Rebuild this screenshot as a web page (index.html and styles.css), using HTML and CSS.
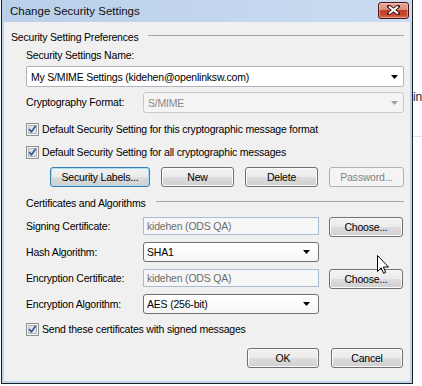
FILE: index.html
```html
<!DOCTYPE html>
<html lang="en">
<head>
  <meta charset="UTF-8" />
  <meta name="viewport" content="width=device-width, initial-scale=1.0"/>
  <title>Change Security Settings</title>
  <link rel="stylesheet" href="styles.css">
</head>
<body>

<div class="desktop">
  <div class="edge-left"></div>

  <div class="window">
    <div class="titlebar">
      <span class="title">Change Security Settings</span>
      <div class="close-btn">
        <svg width="13" height="10" viewBox="0 0 13 10">
          <path d="M2 1.5 L11 8.5 M11 1.5 L2 8.5" stroke="#4a1c1c" stroke-width="4" stroke-linecap="square"/>
          <path d="M2 1.5 L11 8.5 M11 1.5 L2 8.5" stroke="#fff" stroke-width="2"/>
        </svg>
      </div>
    </div>

    <div class="client">
      <div class="group-head first">
        <span>Security Setting Preferences</span>
        <div class="rule"></div>
      </div>

      <div class="label name-label">Security Settings Name:</div>
      <div class="combo name-combo">
        <span>My S/MIME Settings (kidehen@openlinksw.com)</span>
        <svg class="arrow" width="7" height="4" viewBox="0 0 7 4"><path d="M0 0 H7 L3.5 4 Z" fill="#000"/></svg>
      </div>

      <div class="format-row">
        <span class="label">Cryptography Format:</span>
        <div class="combo disabled">
          <span>S/MIME</span>
          <svg class="arrow" width="7" height="4" viewBox="0 0 7 4"><path d="M0 0 H7 L3.5 4 Z" fill="#a0a0a0"/></svg>
        </div>
      </div>

      <div class="check cb-first">
        <svg class="box" width="13" height="13" viewBox="0 0 13 13">
          <rect x="0.5" y="0.5" width="12" height="12" fill="#f6f6f6" stroke="#8e8f8f"/>
          <rect x="2.5" y="2.5" width="8" height="8" fill="#dfe3ea" stroke="#b4b8c0"/>
          <path d="M3.2 6.2 L5.4 8.8 L9.8 2.8" fill="none" stroke="#3f5e9a" stroke-width="1.8"/>
        </svg>
        <span>Default Security Setting for this cryptographic message format</span>
      </div>
      <div class="check cb-second">
        <svg class="box" width="13" height="13" viewBox="0 0 13 13">
          <rect x="0.5" y="0.5" width="12" height="12" fill="#f6f6f6" stroke="#8e8f8f"/>
          <rect x="2.5" y="2.5" width="8" height="8" fill="#dfe3ea" stroke="#b4b8c0"/>
          <path d="M3.2 6.2 L5.4 8.8 L9.8 2.8" fill="none" stroke="#3f5e9a" stroke-width="1.8"/>
        </svg>
        <span>Default Security Setting for all cryptographic messages</span>
      </div>

      <div class="button-row">
        <div class="btn focused labels-btn">Security Labels...</div>
        <div class="btn">New</div>
        <div class="btn">Delete</div>
        <div class="btn disabled pwd-btn">Password...</div>
      </div>

      <div class="group-head second">
        <span>Certificates and Algorithms</span>
        <div class="rule"></div>
      </div>

      <div class="cert-grid">
        <span class="label">Signing Certificate:</span>
        <div class="textbox">kidehen (ODS QA)</div>
        <div class="btn">Choose...</div>

        <span class="label">Hash Algorithm:</span>
        <div class="combo list">
          <span>SHA1</span>
          <svg class="arrow" width="7" height="4" viewBox="0 0 7 4"><path d="M0 0 H7 L3.5 4 Z" fill="#000"/></svg>
        </div>
        <div></div>

        <span class="label">Encryption Certificate:</span>
        <div class="textbox">kidehen (ODS QA)</div>
        <div class="btn">Choose...</div>

        <span class="label">Encryption Algorithm:</span>
        <div class="combo list">
          <span>AES (256-bit)</span>
          <svg class="arrow" width="7" height="4" viewBox="0 0 7 4"><path d="M0 0 H7 L3.5 4 Z" fill="#000"/></svg>
        </div>
        <div></div>
      </div>

      <div class="check cb-send">
        <svg class="box" width="13" height="13" viewBox="0 0 13 13">
          <rect x="0.5" y="0.5" width="12" height="12" fill="#f6f6f6" stroke="#8e8f8f"/>
          <rect x="2.5" y="2.5" width="8" height="8" fill="#dfe3ea" stroke="#b4b8c0"/>
          <path d="M3.2 6.2 L5.4 8.8 L9.8 2.8" fill="none" stroke="#3f5e9a" stroke-width="1.8"/>
        </svg>
        <span>Send these certificates with signed messages</span>
      </div>

      <div class="dialog-buttons">
        <div class="btn">OK</div>
        <div class="btn">Cancel</div>
      </div>
    </div>
  </div>

  <div class="behind">
    <div class="behind-text">in</div>
    <div class="behind-band"></div>
  </div>
</div>

<svg class="cursor" width="12" height="19" viewBox="0 0 12 19">
  <path d="M0.5 0.5 V16.5 L4.2 12.8 L6.6 18.3 L8.7 17.4 L6.4 12 H11.5 Z" fill="#fff" stroke="#000"/>
</svg>

</body>
</html>
```

FILE: styles.css
```css
body {
  margin: 0;
  background: #ffffff;
  font-family: 'Liberation Sans', Arial, sans-serif;
  font-size: 10.5px;
  letter-spacing: -0.2px;
  color: #000;
  position: relative;
  width: 422px;
  height: 386px;
  overflow: hidden;
}
.desktop {
  display: flex;
  align-items: flex-start;
}
.edge-left {
  width: 1px;
  height: 386px;
  background: #f4f4f4;
}
.window {
  box-sizing: border-box;
  width: 412px;
  height: 384px;
  border: 1px solid #1f1f1f;
  border-top: none;
  background: #bcd3ee;
  display: flex;
  flex-direction: column;
}
.titlebar {
  height: 22px;
  display: flex;
  align-items: center;
  justify-content: space-between;
  background: linear-gradient(to right, #b9cfea, #c3d7ee 60%, #cbdcf1);
}
.title {
  margin-left: 8px;
  margin-top: -1px;
  font-size: 11.5px;
  letter-spacing: 0;
  color: #101010;
}
.close-btn {
  box-sizing: border-box;
  width: 31px;
  height: 17px;
  margin-right: 3px;
  margin-top: -2px;
  border: 1px solid #4d1515;
  border-radius: 3px;
  background: linear-gradient(#e7ab9d 0%, #d98f7e 45%, #c2402a 50%, #c8492f 80%, #d9735a 100%);
  box-shadow: inset 0 0 0 1px rgba(255, 220, 210, 0.45);
  display: flex;
  align-items: center;
  justify-content: center;
}
.client {
  flex: 1;
  margin: 0 2px 2px;
  background: #f0f0f0;
  padding: 7px 6px 0 22px;
  display: flex;
  flex-direction: column;
}
.group-head {
  height: 15px;
  display: flex;
  align-items: center;
}
.group-head.first {
  margin-left: -15px;
}
.group-head .rule {
  flex: 1;
  height: 1px;
  background: #a5a5a5;
  margin-left: 10px;
  margin-bottom: 3px;
}
.label {
  line-height: 15px;
}
.name-label {
  margin-top: 4px;
}
.combo {
  box-sizing: border-box;
  height: 21px;
  border: 1px solid #b0b3b9;
  border-radius: 2px;
  background: #fff;
  display: flex;
  align-items: center;
  justify-content: space-between;
  padding: 0 5px 0 4px;
}
.name-combo {
  margin-top: 3px;
}
.combo.disabled {
  width: 261px;
  background: #f4f4f4;
  border-color: #c8c8c8;
  border-radius: 3px;
  color: #8a8a8a;
}
.combo.list {
  height: 20px;
  border-color: #707070;
  border-radius: 3px;
  background: linear-gradient(#ffffff, #f6f6f6);
  padding-left: 3px;
  padding-right: 8px;
}
.format-row {
  margin-top: 5px;
  display: flex;
  align-items: center;
  justify-content: space-between;
}
.check {
  height: 16px;
  display: flex;
  align-items: center;
}
.check .box {
  margin-right: 3px;
  flex: none;
}
.cb-first {
  margin-top: 8px;
}
.cb-second {
  margin-top: 7px;
}
.cb-send {
  margin-top: 7px;
}
.btn {
  box-sizing: border-box;
  height: 20px;
  border: 1px solid #707070;
  border-radius: 3px;
  background: linear-gradient(#f2f2f2 0%, #ebebeb 50%, #dddddd 51%, #cfcfcf 100%);
  box-shadow: inset 0 0 0 1px #fbfbfb;
  display: flex;
  align-items: center;
  justify-content: center;
}
.btn.focused {
  border-color: #3c7fb1;
  box-shadow: inset 0 0 0 1px #a9dcf6;
}
.btn.disabled {
  border-color: #adb2b5;
  background: #f4f4f4;
  box-shadow: none;
  color: #838383;
}
.button-row {
  margin-top: 7px;
  display: flex;
  justify-content: flex-end;
  gap: 11px;
}
.button-row .btn {
  width: 73px;
}
.button-row .labels-btn {
  width: 100px;
}
.button-row .pwd-btn {
  width: 75px;
}
.group-head.second {
  margin-top: 8px;
}
.cert-grid {
  margin-top: 6px;
  display: grid;
  grid-template-columns: 107px 176px 74px;
  grid-auto-rows: 20px;
  column-gap: 10px;
  row-gap: 6px;
  align-items: center;
}
.cert-grid .textbox {
  box-sizing: border-box;
  height: 18px;
  margin-top: -1px;
  border: 1px solid #abbbd0;
  background: #f6f6f6;
  color: #6d6d6d;
  padding-left: 3px;
  line-height: 16px;
}
.cert-grid .btn {
  margin-top: 1px;
}
.dialog-buttons {
  margin-top: 11px;
  margin-right: 1px;
  display: flex;
  justify-content: flex-end;
  gap: 12px;
}
.dialog-buttons .btn {
  width: 72px;
}
.behind {
  flex: 1;
  height: 386px;
  overflow: hidden;
  background: #ffffff;
}
.behind-text {
  margin-top: 90px;
  margin-left: 0;
  font-size: 12px;
  color: #1a2a44;
}
.behind-band {
  margin-top: 32px;
  height: 1px;
  background: #e2e2e2;
}
.cursor {
  position: absolute;
  left: 377px;
  top: 255px;
}
```
